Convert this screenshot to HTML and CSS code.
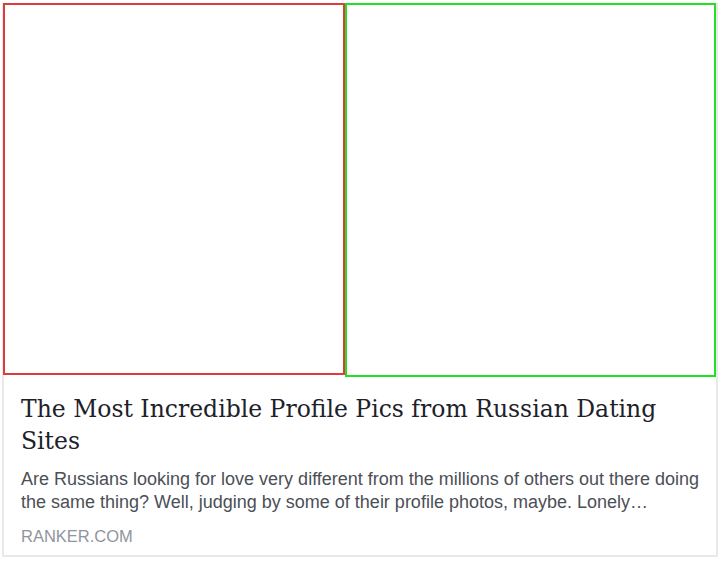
FILE: index.html
```html
<!DOCTYPE html>
<html lang="en">

<head>
  <meta charset="UTF-8">
  <meta name="viewport" content="width=device-width, initial-scale=1.0">
  <link rel="stylesheet" href="styles.css">
</head>

<body>
  <div class="card">
    <div class="media">
      <div class="shot shot-red"></div>
      <div class="shot shot-green"></div>
    </div>
    <div class="body">
      <h2 class="title">The Most Incredible Profile Pics from Russian Dating Sites</h2>
      <p class="desc">Are Russians looking for love very different from the millions of others out there doing the same thing? Well, judging by some of their profile photos, maybe. Lonely…</p>
      <div class="source">RANKER.COM</div>
    </div>
  </div>
</body>

</html>
```

FILE: styles.css
```css
body {
  margin: 0;
  padding: 3px 0 0 2px;
  background: #fff;
  font-family: "Liberation Sans", Arial, sans-serif;
}

.card {
  width: 716px;
  box-sizing: border-box;
  border: 2px solid #e9e9e9;
  border-top: 0;
  background: #fff;
}

.media {
  display: flex;
  align-items: flex-start;
  margin-left: -1px;
}

.shot {
  box-sizing: border-box;
  border: 2px solid;
}

.shot-red {
  width: 342px;
  height: 372px;
  border-color: #e03a3a;
}

.shot-green {
  width: 372px;
  height: 374px;
  border-color: #22e022;
}

.body {
  padding: 16px 14px 9px 17px;
}

.title {
  margin: 0;
  font-family: "DejaVu Serif", Georgia, serif;
  font-weight: normal;
  font-size: 23.5px;
  line-height: 32px;
  color: #1d2129;
}

.desc {
  margin: 11px 0 0;
  font-size: 18px;
  line-height: 23px;
  color: #4b4f56;
}

.source {
  margin-top: 12px;
  font-size: 16.5px;
  line-height: 20px;
  color: #90949c;
}
```
